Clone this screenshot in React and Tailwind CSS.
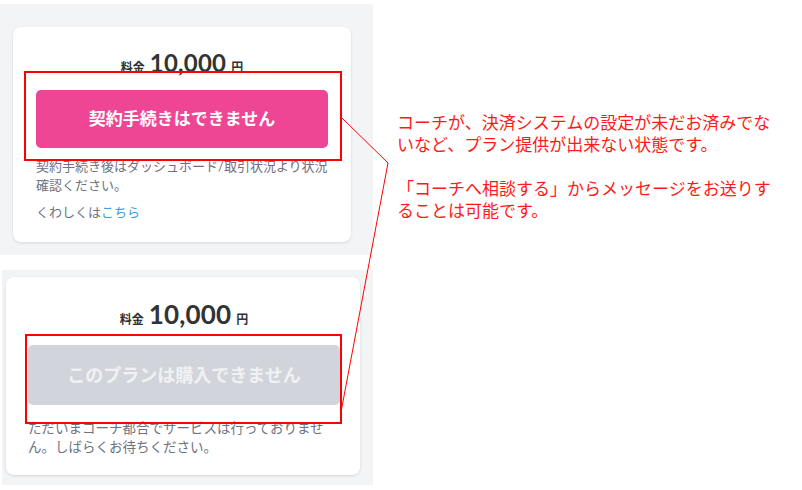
import React from "react";

const jp = { fontFamily: 'Lato, "Noto Sans CJK JP", sans-serif' };

function Price({ big = "text-[24px]" }) {
  return (
    <div className="flex items-baseline justify-center gap-[5px] text-[#333333]">
      <span className="text-[12px] font-bold">料金</span>
      <span className={`${big} font-bold leading-none tracking-[0.2px]`}>10,000</span>
      <span className="text-[12px] font-bold">円</span>
    </div>
  );
}

export default function App() {
  return (
    <div className="relative h-[490px] w-[802px] overflow-hidden bg-white" style={jp}>
      <div className="flex">
        {/* left column: the two plan cards */}
        <div className="flex w-[373px] shrink-0 flex-col pt-[4px]">
          <div className="h-[251px] bg-[#f3f4f6] pl-[13px] pr-[22px] pt-[23px]">
            <div className="h-[215px] rounded-[8px] bg-white px-[23px] pt-[24px] shadow-[0_1px_3px_rgba(0,0,0,0.12)]">
              <Price />
              <button className="mt-[13px] flex h-[58px] w-full items-center justify-center rounded-[5px] bg-[#ee4595] text-[17px] font-bold text-white">
                契約手続きはできません
              </button>
              <p className="mt-[9px] text-[13px] leading-[19px] text-[#6b7280]">
                契約手続き後はダッシュボード/取引状況より状況確認ください。
              </p>
              <p className="mt-[8px] text-[13px] leading-[19px] text-[#6b7280]">
                くわしくは<span className="text-[#3b9de0]">こちら</span>
              </p>
            </div>
          </div>

          <div className="ml-[2px] mt-[15px] h-[215px] bg-[#f3f4f6] pl-[4px] pr-[13px] pt-[7px]">
            <div className="h-[198px] rounded-[8px] bg-white pl-[22px] pr-[20px] pt-[24px] shadow-[0_1px_3px_rgba(0,0,0,0.12)]">
              <Price big="text-[26px]" />
              <button className="mt-[16px] flex h-[60px] w-full items-center justify-center rounded-[5px] bg-[#d1d5db] text-[18px] font-bold text-[#f0f1f4]">
                このプランは購入できません
              </button>
              <p className="mt-[14px] text-[13.5px] leading-[19px] text-[#6b7280]">
                ただいまコーチ都合でサービスは行っておりません。しばらくお待ちください。
              </p>
            </div>
          </div>
        </div>

        {/* right column: annotation */}
        <div
          className="pl-[24px] pt-[111px] text-[17px] leading-[22px] text-[#ff1a1a]"
          style={{ fontFamily: '"Noto Sans CJK JP", sans-serif' }}
        >
          <p className="w-[385px]">コーチが、決済システムの設定が未だお済みでないなど、プラン提供が出来ない状態です。</p>
          <p className="mt-[22px] w-[385px]">「コーチへ相談する」からメッセージをお送りすることは可能です。</p>
        </div>
      </div>

      {/* annotation boxes and connector over the cards */}
      <div className="absolute left-[24px] top-[71px] h-[90px] w-[318px] border-2 border-[#ff0000]" />
      <div className="absolute left-[25px] top-[334px] h-[90px] w-[317px] border-2 border-[#ff0000]" />
      <svg className="absolute left-0 top-0" width="802" height="490">
        <polyline points="341,117 388,163 341,412" fill="none" stroke="#ff0000" strokeWidth="1" />
      </svg>
    </div>
  );
}
